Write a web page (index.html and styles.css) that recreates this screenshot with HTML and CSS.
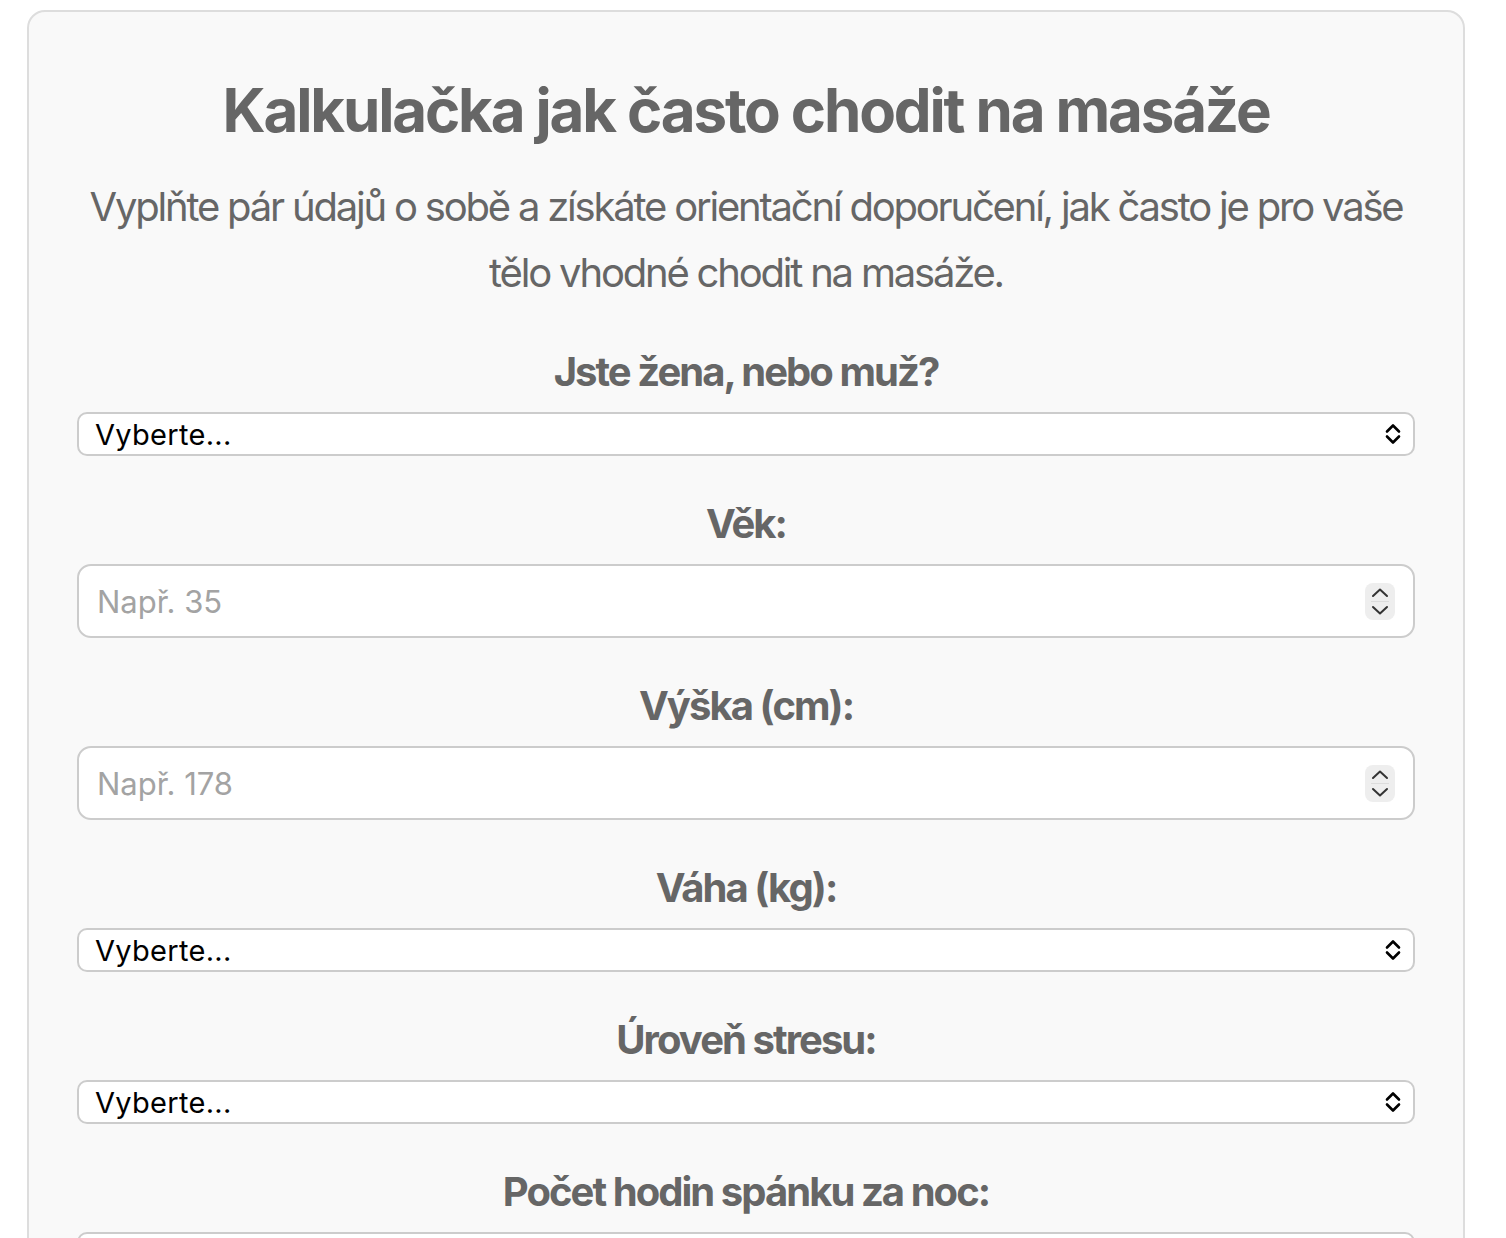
FILE: index.html
```html
<!DOCTYPE html>
<html lang="cs">
<head>
<meta charset="utf-8">
<title>Kalkulačka jak často chodit na masáže</title>
<link rel="stylesheet" href="styles.css">
</head>
<body>
<div class="card">
  <h1 class="title">Kalkulačka jak často chodit na masáže</h1>
  <p class="intro">Vyplňte pár údajů o sobě a získáte orientační doporučení, jak často je pro vaše tělo vhodné chodit na masáže.</p>

  <div class="field">
    <label class="label" for="gender">Jste žena, nebo muž?</label>
    <div class="control">
      <select id="gender" class="select"><option>Vyberte...</option><option>Žena</option><option>Muž</option></select>
      <svg class="select-icon" viewBox="0 0 18 24" width="18" height="24"><path d="M3 9.5 L9 3.5 L15 9.5 M3 14.5 L9 20.5 L15 14.5" fill="none" stroke="#000" stroke-width="2.6" stroke-linecap="round" stroke-linejoin="round"/></svg>
    </div>
  </div>

  <div class="field">
    <label class="label" for="age">Věk:</label>
    <div class="control">
      <input id="age" class="input" type="number" placeholder="Např. 35">
      <span class="spinner"><svg viewBox="0 0 30 37" width="30" height="37"><path d="M8 13 L15 6.5 L22 13" fill="none" stroke="#333" stroke-width="2" stroke-linecap="round" stroke-linejoin="round"/><line x1="6" y1="18.5" x2="24" y2="18.5" stroke="#dcdcdc" stroke-width="1"/><path d="M8 24 L15 30.5 L22 24" fill="none" stroke="#333" stroke-width="2" stroke-linecap="round" stroke-linejoin="round"/></svg></span>
    </div>
  </div>

  <div class="field">
    <label class="label" for="height">Výška (cm):</label>
    <div class="control">
      <input id="height" class="input" type="number" placeholder="Např. 178">
      <span class="spinner"><svg viewBox="0 0 30 37" width="30" height="37"><path d="M8 13 L15 6.5 L22 13" fill="none" stroke="#333" stroke-width="2" stroke-linecap="round" stroke-linejoin="round"/><line x1="6" y1="18.5" x2="24" y2="18.5" stroke="#dcdcdc" stroke-width="1"/><path d="M8 24 L15 30.5 L22 24" fill="none" stroke="#333" stroke-width="2" stroke-linecap="round" stroke-linejoin="round"/></svg></span>
    </div>
  </div>

  <div class="field">
    <label class="label" for="weight">Váha (kg):</label>
    <div class="control">
      <select id="weight" class="select"><option>Vyberte...</option></select>
      <svg class="select-icon" viewBox="0 0 18 24" width="18" height="24"><path d="M3 9.5 L9 3.5 L15 9.5 M3 14.5 L9 20.5 L15 14.5" fill="none" stroke="#000" stroke-width="2.6" stroke-linecap="round" stroke-linejoin="round"/></svg>
    </div>
  </div>

  <div class="field">
    <label class="label" for="stress">Úroveň stresu:</label>
    <div class="control">
      <select id="stress" class="select"><option>Vyberte...</option></select>
      <svg class="select-icon" viewBox="0 0 18 24" width="18" height="24"><path d="M3 9.5 L9 3.5 L15 9.5 M3 14.5 L9 20.5 L15 14.5" fill="none" stroke="#000" stroke-width="2.6" stroke-linecap="round" stroke-linejoin="round"/></svg>
    </div>
  </div>

  <div class="field">
    <label class="label" for="sleep">Počet hodin spánku za noc:</label>
    <div class="control">
      <select id="sleep" class="select"><option>Vyberte...</option></select>
      <svg class="select-icon" viewBox="0 0 18 24" width="18" height="24"><path d="M3 9.5 L9 3.5 L15 9.5 M3 14.5 L9 20.5 L15 14.5" fill="none" stroke="#000" stroke-width="2.6" stroke-linecap="round" stroke-linejoin="round"/></svg>
    </div>
  </div>

  <div class="field">
    <label class="label" for="activity">Fyzická aktivita:</label>
    <div class="control">
      <select id="activity" class="select"><option>Vyberte...</option></select>
      <svg class="select-icon" viewBox="0 0 18 24" width="18" height="24"><path d="M3 9.5 L9 3.5 L15 9.5 M3 14.5 L9 20.5 L15 14.5" fill="none" stroke="#000" stroke-width="2.6" stroke-linecap="round" stroke-linejoin="round"/></svg>
    </div>
  </div>

  <button class="button" type="button">Spočítat</button>
</div>
</body>
</html>
```

FILE: styles.css
```css
html, body {
  margin: 0;
  padding: 0;
  background: #ffffff;
}

body {
  font-family: Inter, "Noto Sans", "Liberation Sans", sans-serif;
  color: #666666;
}

.card {
  box-sizing: border-box;
  width: 1438px;
  margin: 10px 0 40px 27px;
  padding: 48px 48px 60px;
  background: #f9f9f9;
  border: 2px solid #dddddd;
  border-radius: 18px;
  text-align: center;
}

.title {
  margin: 14px 0 0;
  font-size: 60px;
  line-height: 72px;
  font-weight: 700;
  letter-spacing: -2.15px;
  color: #666666;
}

.intro {
  margin: 28px 0 0;
  font-size: 40px;
  line-height: 66px;
  font-weight: 400;
  letter-spacing: -2.2px;
  color: #666666;
}

.field {
  margin-top: 42px;
}

.field + .field {
  margin-top: 44px;
}

.label {
  display: block;
  margin-bottom: 16px;
  font-size: 40px;
  line-height: 48px;
  font-weight: 700;
  letter-spacing: -1.95px;
  color: #666666;
}

.control {
  position: relative;
}

.select {
  display: block;
  box-sizing: border-box;
  width: 100%;
  height: 44px;
  margin: 0;
  padding: 0 50px 0 16px;
  -webkit-appearance: none;
  appearance: none;
  background: #ffffff;
  border: 2px solid #cccccc;
  border-radius: 10px;
  font-family: Inter, "Noto Sans", "Liberation Sans", sans-serif;
  font-size: 29px;
  letter-spacing: 0.3px;
  color: #000000;
  text-align: left;
}

.select-icon {
  position: absolute;
  right: 13px;
  top: 10px;
  pointer-events: none;
}

.input {
  display: block;
  box-sizing: border-box;
  width: 100%;
  height: 74px;
  margin: 0;
  padding: 0 70px 0 18px;
  background: #ffffff;
  border: 2px solid #cccccc;
  border-radius: 14px;
  font-family: Inter, "Noto Sans", "Liberation Sans", sans-serif;
  font-size: 31px;
  color: #000000;
  -moz-appearance: textfield;
}

.input::placeholder {
  color: #a3a3a3;
}

.input::-webkit-outer-spin-button,
.input::-webkit-inner-spin-button {
  -webkit-appearance: none;
  margin: 0;
}

.spinner {
  position: absolute;
  right: 20px;
  top: 19px;
  width: 30px;
  height: 37px;
  background: #eeeeee;
  border-radius: 8px;
  pointer-events: none;
}

.spinner svg {
  display: block;
}

.button {
  margin-top: 50px;
  padding: 16px 40px;
  background: #666666;
  color: #ffffff;
  border: 0;
  border-radius: 12px;
  font-family: Inter, "Noto Sans", "Liberation Sans", sans-serif;
  font-size: 32px;
  font-weight: 700;
}
```
